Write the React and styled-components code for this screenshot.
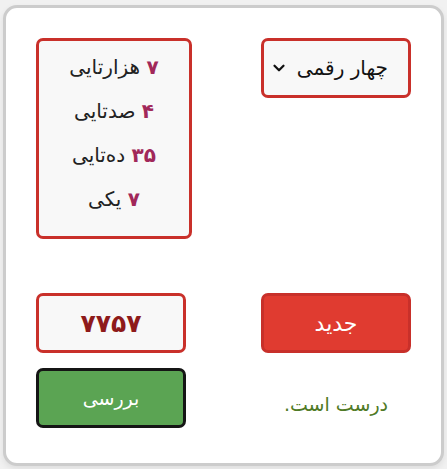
import React from 'react';
import styled, { createGlobalStyle } from 'styled-components';
import { ChevronDown } from 'lucide-react';

const GlobalStyle = createGlobalStyle`
  html, body {
    margin: 0;
    background: #f1f1f1;
  }
  body {
    padding: 5px 3px;
    font-family: "DejaVu Sans", "Noto Sans", sans-serif;
  }
`

const Card = styled.div`
  box-sizing: border-box;
  width: 441px;
  height: 461px;
  padding: 30px 30px 0 30px;
  background: #fff;
  border: 3px solid #cccccc;
  border-radius: 14px;
  box-shadow: 0 3px 6px rgba(0, 0, 0, 0.08);
  display: grid;
  grid-template-columns: auto auto;
  grid-template-rows: 255px 75px 60px;
  justify-content: space-between;
`

const Cell = styled.div`
  grid-column: ${p => p.col};
  grid-row: ${p => p.row};
`

const Box = styled.div`
  box-sizing: border-box;
  width: ${p => p.w || 150}px;
  height: ${p => p.h || 60}px;
  border: 3px solid #c9302a;
  border-radius: 7px;
  background: #f8f8f8;
  direction: rtl;
`

const Picker = styled(Box)`
  display: flex;
  align-items: center;
  justify-content: space-between;
  padding: 0 20px 0 6px;
  font-size: 20px;
  color: #111;
`

const Places = styled(Box)`
  display: flex;
  flex-direction: column;
  align-items: center;
  padding: 4px 0 12px;
`

const Place = styled.div`
  line-height: 44px;
  font-size: 20px;
  color: #222;
  b {
    color: #a1285a;
    font-weight: bold;
  }
`

const Total = styled(Box)`
  display: flex;
  align-items: center;
  justify-content: center;
  font-size: 25px;
  font-weight: bold;
  color: #8e1a1a;
`

const Button = styled.button`
  box-sizing: border-box;
  width: 150px;
  height: 60px;
  border-radius: 7px;
  border: 3px solid ${p => p.edge};
  background: ${p => p.bg};
  color: #fff;
  font-family: inherit;
  font-size: ${p => p.size || 19}px;
  direction: rtl;
  cursor: pointer;
`

const Result = styled.div`
  width: 150px;
  text-align: center;
  direction: rtl;
  font-size: 19px;
  color: #4f7a26;
  padding-top: 25px;
`

const places = [
  ['۷', 'هزارتایی'],
  ['۴', 'صدتایی'],
  ['۳۵', 'ده‌تایی'],
  ['۷', 'یکی'],
]

const App = () => {
  return (
    <>
      <GlobalStyle />
      <Card>
        <Cell col={1} row={1}>
          <Places w={156} h={201}>
            {places.map(([n, label]) => (
              <Place key={label}><b>{n}</b> {label}</Place>
            ))}
          </Places>
        </Cell>
        <Cell col={2} row={1}>
          <Picker>
            <span>چهار رقمی</span>
            <ChevronDown size={18} strokeWidth={3} color="#111" />
          </Picker>
        </Cell>
        <Cell col={1} row={2}>
          <Total>۷۷۵۷</Total>
        </Cell>
        <Cell col={2} row={2}>
          <Button bg="#e03b30" edge="#c8302a" size={22}>جدید</Button>
        </Cell>
        <Cell col={1} row={3}>
          <Button bg="#5ba453" edge="#151515" size={19}>بررسی</Button>
        </Cell>
        <Cell col={2} row={3}>
          <Result>درست است.</Result>
        </Cell>
      </Card>
    </>
  )
}

export default App;
